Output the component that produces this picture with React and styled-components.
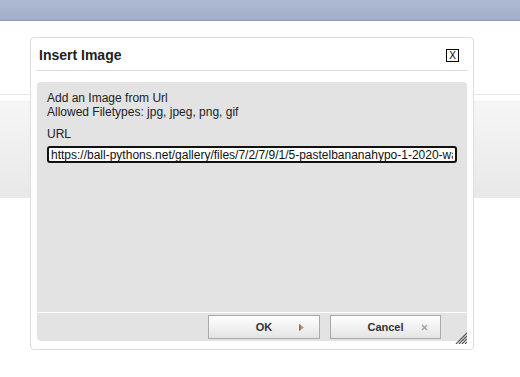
import React from "react";
import styled, { createGlobalStyle } from "styled-components";

const GlobalStyle = createGlobalStyle`
  body {
    margin: 0;
    background: #ffffff;
    font-family: "Liberation Sans", Arial, sans-serif;
  }
`;

const Page = styled.div`
  position: relative;
  height: 377px;
  overflow: hidden;
  background: #ffffff;
`;

const TopBar = styled.div`
  height: 20px;
  background: linear-gradient(#afbad2, #a2aec9);
  border-bottom: 1px solid #8e9bbf;
`;

const Band = styled.div`
  margin-top: 73px;
  height: 103px;
  border-top: 1px solid #e6e6e6;
  background: linear-gradient(#ffffff 0, #ffffff 5px, #f6f6f6 6px, #e8e8e8 100%);
`;

const Dialog = styled.div`
  position: absolute;
  top: 37px;
  left: 30px;
  width: 444px;
  height: 313px;
  box-sizing: border-box;
  display: flex;
  flex-direction: column;
  padding: 0 6px 8px;
  background: #ffffff;
  border: 1px solid #dddddd;
  border-radius: 4px;
`;

const TitleBar = styled.div`
  height: 33px;
  box-sizing: border-box;
  display: flex;
  align-items: center;
  justify-content: space-between;
  margin: 0 -1px;
  padding: 1px 9px 0 3px;
  border-bottom: 1px solid #dddddd;
`;

const Title = styled.span`
  font-size: 14px;
  font-weight: bold;
  color: #222222;
`;

const CloseBox = styled.span`
  width: 11px;
  height: 11px;
  border: 1px solid #000000;
  display: flex;
  align-items: center;
  justify-content: center;
  font-size: 10px;
  line-height: 1;
  color: #000000;
  margin-top: 2px;
`;

const Body = styled.div`
  margin-top: 11px;
  flex: 1;
  background: #e3e3e3;
  border-radius: 4px 4px 0 0;
  padding: 9px 10px;
  font-size: 12px;
  line-height: 14px;
  color: #222222;
`;

const Note = styled.p`
  margin: 0;
`;

const Label = styled.div`
  margin-top: 4px;
  padding-top: 4px;
`;

const UrlInput = styled.input`
  display: block;
  width: 100%;
  height: 17px;
  box-sizing: border-box;
  margin-top: 5px;
  padding: 0 2px;
  border: 2px solid #111111;
  border-radius: 3px;
  background: #ffffff;
  font-family: "Liberation Sans", Arial, sans-serif;
  font-size: 12px;
  color: #111111;
  outline: none;
`;

const Footer = styled.div`
  height: 28px;
  border-top: 1px solid #ffffff;
  background: #e3e3e3;
  border-radius: 0 0 4px 4px;
  display: flex;
  align-items: center;
  justify-content: flex-end;
  gap: 10px;
  padding-right: 26px;
`;

const Button = styled.button`
  position: relative;
  width: ${(p) => p.$width}px;
  height: 24px;
  border: 1px solid #a9a9a9;
  background: linear-gradient(#ffffff, #e4e4e4);
  font-family: "Liberation Sans", Arial, sans-serif;
  font-size: 11px;
  font-weight: bold;
  color: #333333;
  padding: 0;
  cursor: pointer;
`;

const ButtonIcon = styled.span`
  position: absolute;
  right: ${(p) => p.$right}px;
  top: 8px;
  display: flex;
`;

const Grip = styled.span`
  position: absolute;
  right: 6px;
  bottom: 5px;
  display: flex;
`;

const Arrow = () => (
  <svg width="5" height="7" viewBox="0 0 5 7">
    <polygon points="0,0 5,3.5 0,7" fill="#b49c86" />
    <polygon points="0,0 2,1.2 2,5.8 0,7" fill="#8c7866" />
  </svg>
);

const Cross = () => (
  <svg width="7" height="7" viewBox="0 0 7 7">
    <path d="M1 1 L6 6 M6 1 L1 6" stroke="#9a9a9a" strokeWidth="1.1" />
  </svg>
);

const ResizeGrip = () => (
  <svg width="12" height="12" viewBox="0 0 12 12">
    <path
      d="M12 1 L1 12 M12 4 L4 12 M12 7 L7 12 M12 10 L10 12"
      stroke="#555555"
      strokeWidth="1.2"
    />
  </svg>
);

const url =
  "https://ball-pythons.net/gallery/files/7/2/7/9/1/5-pastelbananahypo-1-2020-watermarked.jpg";

export default function App() {
  return (
    <Page>
      <GlobalStyle />
      <TopBar />
      <Band />
      <Dialog>
        <TitleBar>
          <Title>Insert Image</Title>
          <CloseBox>X</CloseBox>
        </TitleBar>
        <Body>
          <Note>
            Add an Image from Url
            <br />
            Allowed Filetypes: jpg, jpeg, png, gif
          </Note>
          <Label>URL</Label>
          <UrlInput defaultValue={url} readOnly />
        </Body>
        <Footer>
          <Button $width={112}>
            OK
            <ButtonIcon $right={15}>
              <Arrow />
            </ButtonIcon>
          </Button>
          <Button $width={111}>
            Cancel
            <ButtonIcon $right={12}>
              <Cross />
            </ButtonIcon>
          </Button>
        </Footer>
        <Grip>
          <ResizeGrip />
        </Grip>
      </Dialog>
    </Page>
  );
}
